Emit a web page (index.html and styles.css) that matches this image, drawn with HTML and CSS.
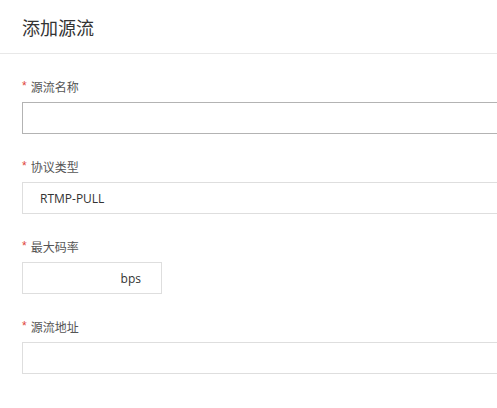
FILE: index.html
```html
<!DOCTYPE html>
<html lang="zh-CN">
<head>
<meta charset="utf-8">
<title>添加源流</title>
<link rel="stylesheet" href="styles.css">
</head>
<body>
<div class="dialog">
  <div class="header"><h1 class="title">添加源流</h1></div>
  <form class="form">
    <div class="field">
      <label class="label"><span class="req">*</span>源流名称</label>
      <div class="input input-wide input-active"></div>
    </div>
    <div class="field">
      <label class="label"><span class="req">*</span>协议类型</label>
      <div class="input input-wide"><span class="value">RTMP-PULL</span></div>
    </div>
    <div class="field">
      <label class="label"><span class="req">*</span>最大码率</label>
      <div class="input input-small"><span class="suffix">bps</span></div>
    </div>
    <div class="field">
      <label class="label"><span class="req">*</span>源流地址</label>
      <div class="input input-wide"></div>
    </div>
  </form>
</div>
</body>
</html>
```
FILE: styles.css
```css
html, body {
  margin: 0;
  padding: 0;
  background: #fff;
  overflow: hidden;
  font-family: "Noto Sans CJK SC", "Noto Sans", sans-serif;
}
.dialog {
  width: 497px;
  height: 408px;
  overflow: hidden;
}
.header {
  height: 53px;
  border-bottom: 1px solid #e8e8e8;
  padding: 0 22px;
  display: flex;
  align-items: center;
}
.title {
  margin: 0;
  font-size: 18px;
  font-weight: normal;
  color: #333;
  line-height: 24px;
}
.form {
  padding: 22px 0 0 22px;
}
.field {
  margin-bottom: 22px;
}
.label {
  display: flex;
  align-items: center;
  height: 20px;
  font-size: 12px;
  color: #555;
  margin-bottom: 6px;
}
.req {
  color: #e0453a;
  margin-right: 4px;
  font-family: "Liberation Sans", sans-serif;
}
.input {
  box-sizing: border-box;
  height: 32px;
  border: 1px solid #dedede;
  display: flex;
  align-items: center;
  font-size: 12px;
  color: #333;
  font-family: "Open Sans", "Noto Sans CJK SC", sans-serif;
}
.input-wide {
  width: 600px;
}
.input-active {
  border-color: #b3b3b3;
}
.input-small {
  width: 140px;
  justify-content: flex-end;
  padding-right: 20px;
}
.value {
  padding-left: 17px;
}
```
